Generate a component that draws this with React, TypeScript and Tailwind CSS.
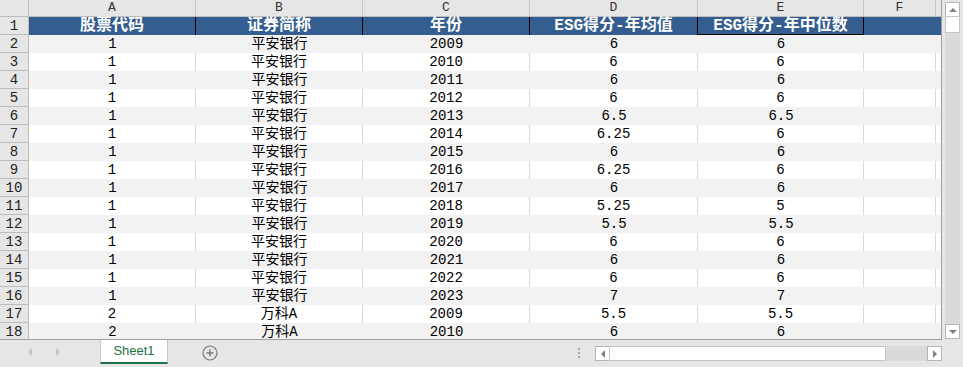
const colW = ["w-[167px]", "w-[167px]", "w-[167px]", "w-[168px]", "w-[166px]", "w-[72px]", "w-[5px]"];
const letters = ["A", "B", "C", "D", "E", "F", ""];
const heads = ["股票代码", "证券简称", "年份", "ESG得分-年均值", "ESG得分-年中位数"];

const rows: string[][] = [
  ["1", "平安银行", "2009", "6", "6"],
  ["1", "平安银行", "2010", "6", "6"],
  ["1", "平安银行", "2011", "6", "6"],
  ["1", "平安银行", "2012", "6", "6"],
  ["1", "平安银行", "2013", "6.5", "6.5"],
  ["1", "平安银行", "2014", "6.25", "6"],
  ["1", "平安银行", "2015", "6", "6"],
  ["1", "平安银行", "2016", "6.25", "6"],
  ["1", "平安银行", "2017", "6", "6"],
  ["1", "平安银行", "2018", "5.25", "5"],
  ["1", "平安银行", "2019", "5.5", "5.5"],
  ["1", "平安银行", "2020", "6", "6"],
  ["1", "平安银行", "2021", "6", "6"],
  ["1", "平安银行", "2022", "6", "6"],
  ["1", "平安银行", "2023", "7", "7"],
  ["2", "万科A", "2009", "5.5", "5.5"],
  ["2", "万科A", "2010", "6", "6"],
];

function Tri({ dir, className }: { dir: "up" | "down" | "left" | "right"; className?: string }) {
  const pts = {
    up: "0,5 4,1 8,5",
    down: "0,1 8,1 4,5",
    left: "5,0 5,8 1,4",
    right: "1,0 1,8 5,4",
  }[dir];
  const vert = dir === "up" || dir === "down";
  return (
    <svg width={vert ? 8 : 6} height={vert ? 6 : 8} className={className}>
      <polygon points={pts} fill="currentColor" />
    </svg>
  );
}

function Grid() {
  return (
    <div className="w-[942px] h-[340px] shrink-0 overflow-hidden bg-white border-r border-b border-[#9e9e9e]">
      {/* column letters */}
      <div className="flex h-[17px] bg-[#e6e6e6] border-b border-[#bdbdbd] text-[13px] leading-[16px] text-[#333]">
        <div className="w-[29px] shrink-0 border-r border-[#bdbdbd]" />
        {letters.map((l, i) => (
          <div
            key={i}
            className={`${colW[i]} shrink-0 flex items-center justify-center ${i < 6 ? "border-r border-[#c8c8c8]" : ""}`}
          >
            {l}
          </div>
        ))}
      </div>

      {/* header row */}
      <div className="flex h-[18px] leading-[18px]">
        <div className="w-[29px] shrink-0 bg-[#e6e6e6] border-r border-b border-[#bdbdbd] text-center text-[14px] text-[#222]">
          1
        </div>
        {heads.map((h, i) => (
          <div
            key={i}
            className={`${colW[i]} shrink-0 bg-[#335e8f] text-white font-bold text-[16px] text-center whitespace-nowrap border-r border-black ${
              i === 4 ? "border-b" : ""
            }`}
          >
            {h}
          </div>
        ))}
        <div className="w-[77px] shrink-0 bg-[#335e8f]" />
      </div>

      {rows.map((r, ri) => {
        const gray = ri % 2 === 0;
        return (
          <div key={ri} className="flex h-[18px] leading-[18px] text-[14px]">
            <div className="w-[29px] shrink-0 bg-[#e6e6e6] border-r border-b border-[#bdbdbd] text-center text-[#222]">
              {ri + 2}
            </div>
            {[...r, "", ""].map((v, ci) => (
              <div
                key={ci}
                className={`${colW[ci]} shrink-0 text-center whitespace-nowrap ${
                  gray ? "bg-[#f2f2f2]" : ci < 6 ? "border-r border-[#d9d9d9]" : ""
                }`}
              >
                {v}
              </div>
            ))}
          </div>
        );
      })}
    </div>
  );
}

function VScroll() {
  return (
    <div className="w-[21px] h-[340px] shrink-0 px-[3px] pt-[2px] pb-[1px] bg-[#e6e6e6]">
      <div className="h-full bg-[#dadada] flex flex-col">
        <div className="h-[15px] bg-white border border-[#b5b5b5] flex items-center justify-center text-[#808080]">
          <Tri dir="up" />
        </div>
        <div className="h-[17px] bg-white border border-[#c6c6c6] -mt-px" />
        <div className="flex-1" />
        <div className="h-[15px] bg-white border border-[#b5b5b5] flex items-center justify-center text-[#808080]">
          <Tri dir="down" />
        </div>
      </div>
    </div>
  );
}

function BottomBar() {
  return (
    <div className="flex items-start h-[27px] bg-[#e6e6e6]">
      <div className="w-[100px] h-[24px] shrink-0 flex items-center text-[#c4c4c4]">
        <Tri dir="left" className="ml-[27px]" />
        <Tri dir="right" className="ml-[22px]" />
      </div>
      <div className="w-[68px] h-[24px] shrink-0 bg-white border-x border-[#c6c6c6] border-b-2 border-b-[#217346] flex items-center justify-center font-['Liberation_Sans',sans-serif] text-[13px] text-[#217346]">
        Sheet1
      </div>
      <svg width="16" height="16" className="ml-[34px] mt-[5px] shrink-0 text-[#7a7a7a]">
        <circle cx="8" cy="8" r="7" fill="none" stroke="currentColor" strokeWidth="1.2" />
        <path d="M8 4.5v7M4.5 8h7" stroke="currentColor" strokeWidth="1.4" />
      </svg>
      <div className="ml-[360px] mt-[8px] flex flex-col gap-[2px] shrink-0">
        <div className="w-[2px] h-[2px] bg-[#a6a6a6]" />
        <div className="w-[2px] h-[2px] bg-[#a6a6a6]" />
        <div className="w-[2px] h-[2px] bg-[#a6a6a6]" />
      </div>
      <div className="ml-[15px] mt-[6px] w-[347px] h-[15px] shrink-0 flex">
        <div className="w-[15px] bg-white border border-[#b5b5b5] flex items-center justify-center text-[#808080]">
          <Tri dir="left" />
        </div>
        <div className="w-[277px] bg-white border border-[#c6c6c6] -ml-px" />
        <div className="flex-1 bg-[#dadada]" />
        <div className="w-[15px] bg-white border border-[#b5b5b5] flex items-center justify-center text-[#808080]">
          <Tri dir="right" />
        </div>
      </div>
    </div>
  );
}

export default function App() {
  return (
    <div className="w-[963px] h-[367px] overflow-hidden flex flex-col bg-[#e6e6e6] text-black font-['Liberation_Mono','Noto_Sans_CJK_SC',monospace]">
      <div className="flex h-[340px] shrink-0">
        <Grid />
        <VScroll />
      </div>
      <BottomBar />
    </div>
  );
}
